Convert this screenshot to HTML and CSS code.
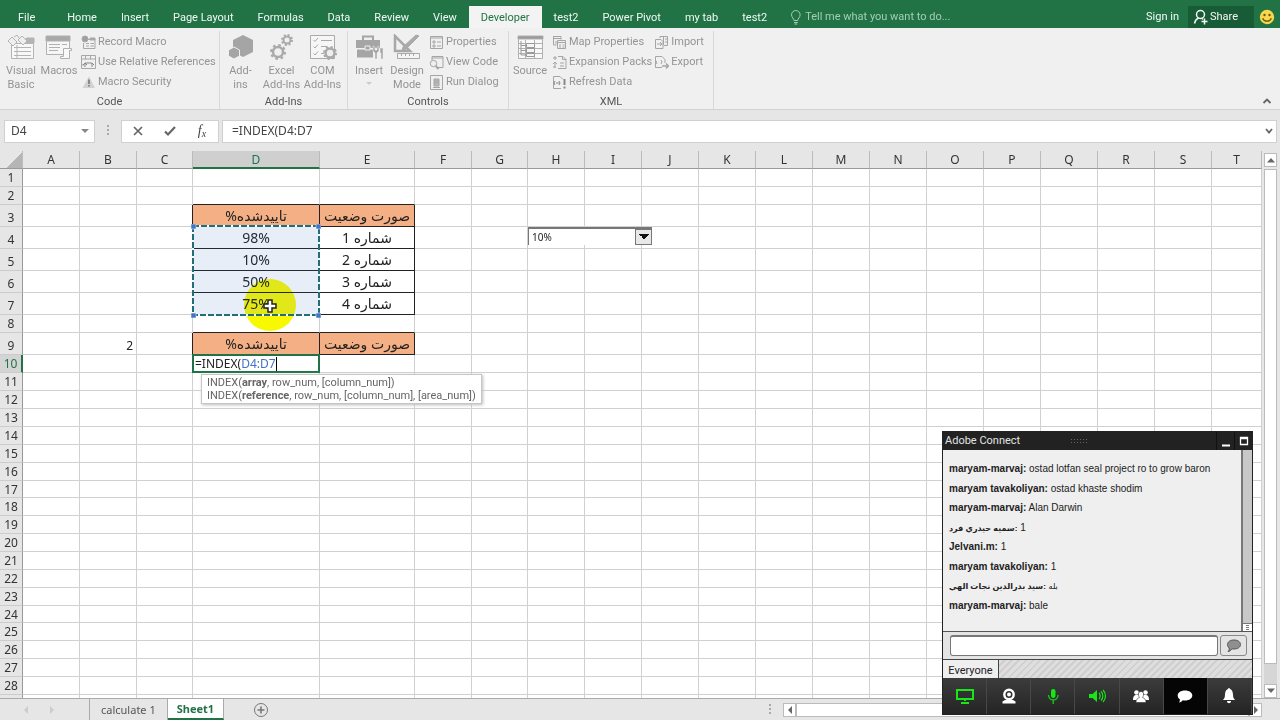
FILE: index.html
```html
<!DOCTYPE html>
<html lang="en">
<head>
<meta charset="utf-8">
<title>Sheet1 - Excel</title>
<link rel="stylesheet" href="styles.css">
</head>
<body>
<div class="app">
  <nav class="tabs">
    <button class="tab file">File</button>
    <button class="tab">Home</button>
    <button class="tab">Insert</button>
    <button class="tab">Page Layout</button>
    <button class="tab">Formulas</button>
    <button class="tab">Data</button>
    <button class="tab">Review</button>
    <button class="tab">View</button>
    <button class="tab active">Developer</button>
    <button class="tab">test2</button>
    <button class="tab">Power Pivot</button>
    <button class="tab">my tab</button>
    <button class="tab">test2</button>
    <button class="tell"><svg width="12" height="15" viewBox="0 0 12 15" fill="none" stroke="currentColor"><path d="M4 10.500C4 8.500 1.500 7.500 1.500 4.800a4.300 4.300 0 0 1 8.600 0C10.100 7.500 7.700 8.500 7.700 10.500zM4 12.500h3.700M4.500 14h2.700"/></svg>Tell me what you want to do...</button>
    <button class="signin">Sign in</button>
    <button class="share"><svg width="16" height="16" viewBox="0 0 16 16" fill="none" stroke="currentColor" stroke-width="1.500"><circle cx="7.500" cy="5.500" r="4"/><path d="M5.500 9C3 10 2 12 1.500 14.500M9 9.500l1 .8M11.500 9.500v6M8.500 12.500h6"/></svg>Share</button>
    <svg class="smile" width="16" height="16" viewBox="0 0 16 16"><circle cx="8" cy="8" r="7.200" fill="#f8d84a"/><circle cx="5.500" cy="6" r="1.200" fill="#6b5314"/><circle cx="10.500" cy="6" r="1.200" fill="#6b5314"/><path d="M3.700 9.200c1.500 4 7.100 4 8.600 0" fill="none" stroke="#6b5314" stroke-width="1.300"/></svg>
  </nav>

  <section class="ribbon">
    <div class="group code">
      <div class="tools">
        <button class="big"><svg width="28" height="26" viewBox="0 0 28 26" fill="none" stroke="#b4b4b4"><path d="M4.500 9.500h22v15h-22z" fill="#f8f8f8"/><path d="M19 4h8v5h-8z" fill="#b4b4b4"/><path d="M7 13.500h17M7 17.500h17M7 21.500h17M10 11v13"/><path d="M1 7l4-4 5 5-4 4zM11 6l4-4 5 5-4 4z" fill="#efefef"/><path d="M7 3l3-2 2 3"/></svg>Visual<br>Basic</button>
        <button class="big"><svg width="28" height="26" viewBox="0 0 28 26" fill="none" stroke="#b0b0b0"><path d="M1.500 2.500h23v18h-23z" fill="#f6f6f6"/><path d="M1 2h24v5H1z" fill="#a8a8a8"/><path d="M4 10.500h11M17 10.500h5M4 13.500h11M4 16.500h9"/><path d="M18.500 14.500h8v2h-2v8h-9v-2h3z" fill="#f8f8f8"/></svg>Macros</button>
        <div class="stack">
          <button><svg viewBox="0 0 15 15" fill="none" stroke="#a8a8a8"><path d="M4 4.500h10v9H2.500V8"/><circle cx="4" cy="4" r="3" fill="#a0a0a0"/><path d="M9 3h5v2H9z" fill="#a8a8a8"/><path d="M5 8.500h3M9.500 8.500H13M5 11h3M9.500 11H13"/></svg>Record Macro</button>
          <button><svg viewBox="0 0 15 15" fill="none" stroke="#a8a8a8"><path d="M.5.500h14v13H.5zM.5 4h14M.5 10h3M4.500.500v4M9.500.500v4"/><path d="M4 12V8h7v4M4 8l-2 2M4 8l2 2M11 8l2 2" stroke="#888"/></svg>Use Relative References</button>
          <button><svg viewBox="0 0 15 15"><path d="M8 1.500l6 11.500H1.500z" fill="#d2d2d2"/><path d="M7.200 4.500h1.600v4.500H7.200zM7.200 10h1.600v1.600H7.200z" fill="#777"/></svg>Macro Security</button>
        </div>
      </div>
      <div class="caption">Code</div>
    </div>
    <div class="group addins">
      <div class="tools">
        <button class="big"><svg width="28" height="26" viewBox="0 0 28 26" fill="#a5a5a5"><path d="M16 1l10 5v12l-10 5-10-5V6z"/><path d="M7 13l5.500 3v6L7 25l-5.500-3v-6z" stroke="#f0f0f0"/></svg>Add-<br>ins</button>
        <button class="big"><svg width="28" height="26" viewBox="0 0 28 26" fill="none" stroke="#aaa"><circle cx="10" cy="18" r="5" stroke-width="2.500"/><circle cx="10" cy="18" r="7" stroke-width="2" stroke-dasharray="2.700 2.800"/><circle cx="19" cy="6" r="3.500" stroke-width="2"/><circle cx="19" cy="6" r="5" stroke-width="2" stroke-dasharray="2 1.930"/></svg>Excel<br>Add-Ins</button>
        <button class="big"><svg width="28" height="26" viewBox="0 0 28 26" fill="none" stroke="#aaa"><path d="M1.500 1.500h24v23h-24z" fill="#f6f6f6"/><path d="M4.500 6l1.500 1.500L9 4M4.500 12.500L6 14l3-3.500M4.500 19.500L6 21l3-3.500M12 6.500h11M12 12.500h6M12 19.500h3"/><circle cx="21" cy="19" r="4.500" stroke-width="2.500" fill="#eee"/><circle cx="21" cy="19" r="6" stroke-width="2" stroke-dasharray="2.200 2.510"/></svg>COM<br>Add-Ins</button>
      </div>
      <div class="caption">Add-Ins</div>
    </div>
    <div class="group controls">
      <div class="tools">
        <button class="big"><svg width="28" height="26" viewBox="0 0 28 26" fill="#a5a5a5"><path d="M8 6V2.500h10V6" fill="none" stroke="#a5a5a5" stroke-width="2"/><path d="M1 6h24v8H1zM2 15.500h16v8H2z"/><path d="M10 12h5v4h-5z" stroke="#eee"/><path d="M18 12v5l2 2v6h2v-6l2-2v-5l-2 1v3h-2v-3zM25 14h3v11h-2v-6h-1z" stroke="#f0f0f0" stroke-width=".5"/></svg>Insert<i class="caret"></i></button>
        <button class="big"><svg width="28" height="26" viewBox="0 0 28 26" fill="none" stroke="#a8a8a8"><path d="M2 2v15h15z" stroke-width="2.500"/><path d="M26 2L13 15l-4 2 1-4L23 1z" fill="#aaa"/><path d="M4.500 19.500h22v5h-22z" fill="#f5f5f5"/><path d="M8.500 20v2M12.500 20v2M16.500 20v2M20.500 20v2"/></svg>Design<br>Mode</button>
        <div class="stack">
          <button><svg viewBox="0 0 15 15" fill="none" stroke="#a5a5a5"><path d="M1.500 1.500h12v12h-12zM1.500 3h12"/><path d="M4 6h2v2H4zM4 10h2v2H4zM8 7h4M8 11h4"/></svg>Properties</button>
          <button><svg viewBox="0 0 15 15" fill="none" stroke="#a5a5a5"><path d="M3 5V1.500h11v11H9M3 3h11"/><circle cx="4.500" cy="8.500" r="3.200"/><path d="M7 11l2.500 3" stroke-width="2"/></svg>View Code</button>
          <button><svg viewBox="0 0 15 15" fill="none" stroke="#a5a5a5"><path d="M1.500.500h12v14h-12z"/><path d="M5 4h5v7H5zM5 6h5M5 8h5" fill="#bbb"/><path d="M4 12.500h7"/></svg>Run Dialog</button>
        </div>
      </div>
      <div class="caption">Controls</div>
    </div>
    <div class="group xml">
      <div class="tools">
        <button class="big"><svg width="28" height="26" viewBox="0 0 28 26" fill="none" stroke="#b0b0b0"><path d="M2.500 3.500h24v21h-24z" fill="#f8f8f8"/><path d="M2 2h25v3H2z" fill="#999"/><path d="M2 9.500h24M2 14.500h24M2 19.500h24M9.500 6v18M18.500 6v18"/><path d="M5 7v14h5M5 11.500h5M5 16.500h5" stroke="#999"/><path d="M10.500 9.500h8v4h-8zM10.500 14.500h8v4h-8zM10.500 19.500h8v3h-8z" fill="#f5f5f5" stroke="#999"/></svg>Source</button>
        <div class="stack">
          <button><svg viewBox="0 0 15 15" fill="none" stroke="#a5a5a5"><path d="M1 1.500h8v3M1.500 1v9h3M1 3.500h8M4 6v3"/><path d="M5.500 5.500h8v8h-8zM5.500 7.500h8M7 10h2M10.500 10h2M7 12h2M10.500 12h2"/></svg>Map Properties</button>
          <button><svg viewBox="0 0 15 15" fill="none" stroke="#a5a5a5"><path d="M6 1.500h5l3 3v9H6M10.500 1.500v3H14"/><path d="M3 1v4M1 3h4M3 13V7l-2 2M3 7l2 2M8 8h4M8 11h4M1 12h3"/></svg>Expansion Packs</button>
          <button><svg viewBox="0 0 15 15" fill="none" stroke="#a5a5a5"><path d="M9 13.500H1.500v-12H8l3 3"/><path d="M3 6l-1 2 1 2M7 6l1 2-1 2M4 8h3" stroke="#888"/><path d="M12.500 4v6M12.500 11.500v2" stroke="#888" stroke-width="2"/></svg>Refresh Data</button>
        </div>
        <div class="stack">
          <button><svg viewBox="0 0 15 15" fill="none" stroke="#a5a5a5"><path d="M6 3V1.500h7.500v9H10M9.500 1v9"/><path d="M1.500 4.500H7l2 2v7H1.500zM3 9h5M6 7l2 2-2 2M11 4h2M11 7h2"/></svg>Import</button>
          <button><svg viewBox="0 0 15 15" fill="none" stroke="#a5a5a5"><path d="M8 12.500H1.500v-11H8l3 3V8M3 6l-1 1 1 2M7 5l1 2-1 2"/><path d="M8 11h6M12 8.500l2.500 2.500-2.500 2.500" stroke-width="1.500"/></svg>Export</button>
        </div>
      </div>
      <div class="caption">XML</div>
    </div>
    <button class="collapse" aria-label="Collapse ribbon"><svg width="10" height="8" viewBox="0 0 10 8"><path d="M1.500 6L5 2.500 8.500 6" fill="none" stroke="#666" stroke-width="1.800"/></svg></button>
  </section>

  <section class="formula">
    <div class="namebox"><input aria-label="Name box" value="D4"><i class="caret"></i></div>
    <span class="dots"></span>
    <div class="fbuttons">
      <button aria-label="Cancel"><svg width="12" height="12" viewBox="0 0 12 12"><path d="M2 2l8 8M10 2l-8 8" stroke="#666" stroke-width="1.700"/></svg></button>
      <button aria-label="Enter"><svg width="14" height="12" viewBox="0 0 14 12"><path d="M2 6.500l3 3L12 2" fill="none" stroke="#666" stroke-width="2.200"/></svg></button>
      <button aria-label="Insert function" class="fx">f<small>x</small></button>
    </div>
    <div class="fbox"><input aria-label="Formula bar" value="=INDEX(D4:D7"><svg width="10" height="8" viewBox="0 0 10 8"><path d="M2 2l3 3.500L8 2" fill="none" stroke="#666" stroke-width="1.800"/></svg></div>
  </section>

  <main class="sheet">
    <div class="gridwrap"><table class="grid" id="grid"></table></div>
    <div class="vscroll">
      <button aria-label="Scroll up"><svg width="8" height="6" viewBox="0 0 8 6"><path d="M0 5.500L4 1l4 4.500z"/></svg></button>
      <div class="vthumb"></div>
      <div class="vtrack"></div>
      <button aria-label="Scroll down"><svg width="8" height="6" viewBox="0 0 8 6"><path d="M0 .500L4 5 8 .500z"/></svg></button>
    </div>
  </main>

  <footer class="sheets">
    <span class="nav"><svg width="6" height="8" viewBox="0 0 6 8"><path d="M5 0v8L1 4z"/></svg><svg width="6" height="8" viewBox="0 0 6 8"><path d="M1 0v8l4-4z"/></svg></span>
    <button class="stab">calculate 1</button>
    <button class="stab on">Sheet1</button>
    <button class="add" aria-label="New sheet"><svg width="16" height="16" viewBox="0 0 16 16" fill="none" stroke="#777"><circle cx="8" cy="8" r="6.500"/><path d="M8 4.500v7M4.500 8h7" stroke-width="1.600"/></svg></button>
    <span class="dots"></span>
    <div class="hscroll">
      <button aria-label="Scroll left"><svg width="6" height="8" viewBox="0 0 6 8"><path d="M5 0v8L1 4z"/></svg></button>
      <div class="hthumb"></div>
      <button aria-label="Scroll right"><svg width="6" height="8" viewBox="0 0 6 8"><path d="M1 0v8l4-4z"/></svg></button>
    </div>
  </footer>

  <aside class="chat">
    <header><span>Adobe Connect</span><i class="grip"></i>
      <button aria-label="Minimize"><svg width="10" height="12" viewBox="0 0 10 12"><path d="M1 10.500h8" stroke="#fff" stroke-width="2"/></svg></button>
      <button aria-label="Maximize"><svg width="10" height="12" viewBox="0 0 10 12"><path d="M1.500 2.500h7v7h-7zM1 3.500h8" fill="none" stroke="#fff" stroke-width="1.300"/></svg></button>
    </header>
    <div class="log">
      <ul>
        <li><b>maryam-marvaj:</b> ostad lotfan seal project ro to grow baron</li>
        <li><b>maryam tavakoliyan:</b> ostad khaste shodim</li>
        <li><b>maryam-marvaj:</b> Alan Darwin</li>
        <li><b class="fa" dir="rtl">:سميه حيدري فرد</b> 1</li>
        <li><b>Jelvani.m:</b> 1</li>
        <li><b>maryam tavakoliyan:</b> 1</li>
        <li><b class="fa" dir="rtl">:سيد بدرالدين نجات الهي</b> <span class="fa">بله</span></li>
        <li><b>maryam-marvaj:</b> bale</li>
      </ul>
      <div class="logbar"><i></i></div>
    </div>
    <div class="compose">
      <input aria-label="Message">
      <button aria-label="Send"><svg width="16" height="14" viewBox="0 0 16 14"><path d="M8 1c4 0 6.500 2 6.500 4.500S12 10 8 10c-1 0-1.500 0-2.200-.2C5 11.500 3.500 12.500 2 12.500c1-1 1.500-2 1.200-3.500C2 8 1.500 7 1.500 5.500 1.500 3 4 1 8 1z" fill="#8f8f8f" stroke="#555"/></svg></button>
    </div>
    <div class="rooms"><button>Everyone</button></div>
    <div class="dock">
      <button aria-label="Share screen"><svg viewBox="0 0 20 20" fill="none" stroke="#19e619" stroke-width="2"><path d="M2 4h16v9H2zM10 13v2M6 17h8"/></svg></button>
      <button aria-label="Camera"><svg viewBox="0 0 20 20" fill="#fff"><circle cx="10" cy="8.500" r="4.700" fill="none" stroke="#fff" stroke-width="2.400"/><circle cx="10" cy="8.500" r="2"/><path d="M6 14h8l2.500 1.500v2h-13v-2z"/></svg></button>
      <button aria-label="Microphone"><svg viewBox="0 0 20 20" fill="#19e619"><rect x="8" y="3" width="4.500" height="9" rx="2.200"/><path d="M5.500 9c0 6.500 9.500 6.500 9.500 0M10.200 14v4" fill="none" stroke="#19c619" stroke-width="1.400"/></svg></button>
      <button aria-label="Speaker"><svg viewBox="0 0 20 20" fill="#19e619"><path d="M2 8h3.500L10 4v12l-4.500-4H2z"/><path d="M12 7c1.500 1.500 1.500 4.500 0 6M14 5.500c2.500 2.500 2.500 6.500 0 9M16 4c3.300 3.300 3.300 8.700 0 12" fill="none" stroke="#19e619" stroke-width="1.200"/></svg></button>
      <button aria-label="Attendees"><svg viewBox="0 0 20 20" fill="#fff"><circle cx="5.500" cy="6.500" r="2.300"/><circle cx="14.500" cy="6.500" r="2.300"/><path d="M2 14c0-4 1.500-5 3.500-5h9c2 0 3.500 1 3.500 5z"/><path d="M5 16.500c0-3.500 1.500-4 3.500-5-2-3-1-6 1.500-6s3.500 3 1.500 6c2 1 3.500 1.500 3.500 5z" stroke="#333" stroke-width=".6"/></svg></button>
      <button aria-label="Chat" class="on"><svg viewBox="0 0 20 20" fill="#fff"><path d="M10 4.500c4.500 0 7.300 2.200 7.300 5s-2.800 5-7.300 5c-1 0-1.600 0-2.300-.2-1 1.300-2 2.200-3.700 2.200.8-1 1-2 .8-3.200C3.400 12.500 2.700 11 2.700 9.500c0-2.800 2.800-5 7.300-5z"/></svg></button>
      <button aria-label="Alerts"><svg viewBox="0 0 20 20" fill="#fff"><path d="M10 3c3 0 3.800 2.500 4 5.500.1 3 .5 4 2.200 5.500H3.800C5.500 12.500 5.900 11.500 6 8.500 6.200 5.500 7 3 10 3zM8 15h4c0 3-4 3-4 0zM9.300 2h1.400v2H9.300z"/></svg></button>
    </div>
  </aside>
</div>
<script src="grid.js"></script>
</body>
</html>
```
FILE: grid.js
```js
const cols = 'ABCDEFGHIJKLMNOPQRST'.split('');
const widths = { C: 56, D: 127, E: 95, G: 56 };
const tall = [3, 4, 5, 6, 7, 9];
const short = [17, 24];

const ants = `<svg class="glow" viewBox="0 0 130 108" width="130" height="108"><circle cx="79" cy="81" r="26" fill="#f8f800"/></svg>
<svg class="ants" viewBox="0 0 130 94" width="130" height="94" fill="none">
  <rect x="2" y="2" width="126" height="89" fill="#4472c4" fill-opacity=".12"/>
  <rect x="2" y="2" width="126" height="89" stroke="#fff" stroke-width="2"/>
  <rect x="2" y="2" width="126" height="89" stroke="#1f6f78" stroke-width="2" stroke-dasharray="6 2"/>
  <g fill="#4472c4" stroke="#fff" stroke-width=".5"><rect x="0" y="0" width="5" height="5"/><rect x="125" y="0" width="5" height="5"/><rect x="0" y="89" width="5" height="5"/><rect x="125" y="89" width="5" height="5"/></g>
  <path d="M77 76h4v4h4v4h-4v4h-4v-4h-4v-4h4z" fill="#fff" stroke="#222" stroke-width="1.500"/>
</svg>`;

const cells = {
  D3: ['head', '<span dir="rtl">تاییدشده%</span>'],
  E3: ['head', '<span dir="rtl">صورت وضعیت</span>'],
  D4: ['box pos', '98%' + ants], D5: ['box', '10%'], D6: ['box', '50%'], D7: ['box', '75%'],
  E4: ['box', '<span dir="rtl">شماره 1</span>'],
  E5: ['box', '<span dir="rtl">شماره 2</span>'],
  E6: ['box', '<span dir="rtl">شماره 3</span>'],
  E7: ['box', '<span dir="rtl">شماره 4</span>'],
  D9: ['head', '<span dir="rtl">تاییدشده%</span>'],
  E9: ['head', '<span dir="rtl">صورت وضعیت</span>'],
  B9: ['num', '2'],
  H4: ['pos', '<select class="combo" aria-label="Percentage"><option>10%</option></select>'],
  D10: ['pos edit', '<div class="editor">=INDEX(<em>D4:D7</em><i></i></div><div class="hint">INDEX(<b>array</b>, row_num, [column_num])<br>INDEX(<b>reference</b>, row_num, [column_num], [area_num])</div>']
};
const topEdge = ['D2', 'E2', 'D8', 'E8'];
const leftEdge = ['C3', 'C4', 'C5', 'C6', 'C7', 'C9'];

let html = '<colgroup><col style="width:23px">';
for (const c of cols) html += c === 'T' ? '<col>' : `<col style="width:${widths[c] || 57}px">`;
html += '</colgroup><thead><tr><th class="corner"></th>';
for (const c of cols) html += `<th${c === 'D' ? ' class="sel"' : ''}>${c}</th>`;
html += '</tr></thead><tbody>';
for (let r = 1; r <= 29; r++) {
  const size = tall.includes(r) ? 'tall' : short.includes(r) ? 'short' : '';
  html += `<tr class="${size}"><th${r === 10 ? ' class="sel"' : ''}>${r < 29 ? r : ''}</th>`;
  for (const c of cols) {
    const id = c + r;
    const [cls, body] = cells[id] || ['', ''];
    const edge = (topEdge.includes(id) ? ' bedge' : '') + (leftEdge.includes(id) ? ' redge' : '');
    html += `<td class="${cls}${edge}">${body}</td>`;
  }
  html += '</tr>';
}
document.getElementById('grid').innerHTML = html + '</tbody>';
```
FILE: styles.css
```css
* { box-sizing: border-box; }
body { margin: 0; font: 11px/14px Roboto, "DejaVu Sans", sans-serif; color: #222; }
button { border: 0; background: none; padding: 0; margin: 0; font: inherit; color: inherit; white-space: nowrap; }
input { font: inherit; border: 0; padding: 0; color: inherit; min-width: 0; background: transparent; }
svg { flex: none; }
.app { position: relative; display: flex; flex-direction: column; height: 100vh; overflow: hidden; background: #e6e6e6; }

.tabs { display: flex; align-items: stretch; height: 28px; flex: none; padding-top: 6px; background: #217346; color: #f2f8f4; }
.tab { padding: 1px 12px 0; }
.tab.file { padding: 1px 20px 0 18px; }
.tab.active { background: #f3f3f3; color: #217346; }
.tell { display: flex; align-items: center; gap: 3px; padding-left: 11px; color: #a5cdb5; }
.signin { margin-left: auto; padding: 0 9px; }
.share { display: flex; align-items: center; gap: 1px; width: 66px; padding-left: 5px; background: #185c37; }
.smile { margin: 3px 5px 0 5px; }

.ribbon { display: flex; flex: none; height: 82px; padding: 3px 0 0; background: #f0f0f0; border-bottom: 1px solid #d2d2d2; color: #949494; }
.group { display: flex; flex-direction: column; justify-content: space-between; border-right: 1px solid #d8d8d8; padding: 0 2px; }
.code { width: 220px; }
.addins { width: 128px; padding: 0; }
.controls { width: 161px; }
.xml { width: 205px; }
.tools { display: flex; }
.big { display: flex; flex-direction: column; align-items: center; flex: none; width: 38px; padding-top: 3px; line-height: 14px; gap: 4px; }
.addins .big { width: 41px; }
.stack { display: flex; flex-direction: column; padding: 1px 0 0 3px; }
.stack + .stack { padding-left: 2px; }
.stack button { display: flex; align-items: center; gap: 2px; height: 20px; }
.stack svg { width: 15px; height: 15px; }
.caption { text-align: center; color: #555; line-height: 14px; }
.caret { width: 0; height: 0; border: 4px solid transparent; border-top-color: #888; border-bottom: 0; }
.big .caret { border-width: 3px; border-top-color: #ccc; border-bottom: 0; }
.collapse { margin: auto 8px 0 auto; }

.formula { display: flex; align-items: center; flex: none; height: 41px; padding: 1px 3px 0 4px; color: #444; font: 12px/16px "Noto Sans", sans-serif; }
.namebox { display: flex; align-items: center; width: 91px; height: 23px; padding: 0 5px 0 6px; background: #fff; border: 1px solid #d0d0d0; }
.namebox input { flex: 1; }
.dots { width: 2px; height: 12px; margin: 0 12px; background: repeating-linear-gradient(#aaa 0 2px, transparent 2px 4px); }
.fbuttons { display: flex; width: 98px; height: 23px; background: #fff; border: 1px solid #d0d0d0; }
.fbuttons button { flex: 1; display: flex; align-items: center; justify-content: center; }
.fbuttons .fx { font: italic 14px "Liberation Serif", serif; }
.fx small { font-size: 10px; padding-top: 4px; }
.fbox { display: flex; align-items: center; flex: 1; height: 23px; margin-left: 3px; padding: 0 2px 0 9px; background: #fff; border: 1px solid #d0d0d0; }
.fbox input { flex: 1; }

.sheet { display: flex; flex: 1; min-height: 0; background: #fff; }
.gridwrap { flex: 1; min-width: 0; overflow: hidden; }
.grid { table-layout: fixed; width: 100%; border-spacing: 0; font: 12px/16px "Noto Sans", "DejaVu Sans", sans-serif; }
.grid th, .grid td { height: 18px; padding: 0; line-height: 16px; border: solid #d0d0d0; border-width: 0 1px 1px 0; }
.grid th { font-weight: 400; color: #333; background: #e6e6e6; border-color: #bbb; overflow: hidden; }
.grid thead th { height: 18px; border-bottom-color: #999; }
.grid thead .sel { background: #cfcfcf; color: #217346; border-bottom: 2px solid #217346; line-height: 15px; }
.grid tbody th { border-bottom-color: #ccc; border-right-color: #999; }
.grid tbody .sel { background: #d4d4d4; color: #217346; border-right: 2px solid #217346; }
.grid .corner { background: linear-gradient(135deg, #e6e6e6 60%, #b5b5b5 60%); }
.grid .tall > * { height: 22px; }
.grid .tall > th { padding-top: 4px; }
.grid .short > * { height: 17px; line-height: 15px; }
.grid td.box, .grid td.head { text-align: center; font-size: 14px; line-height: 20px; border-color: #222; }
.grid td.head { background: #f4b084; line-height: 18px; }
.grid td.num { text-align: right; padding: 4px 3px 0 0; }
.grid td.bedge { border-bottom-color: #222; }
.grid td.redge { border-right-color: #222; }
.grid td.pos { position: relative; }
.ants, .glow { position: absolute; left: -2px; top: -3px; z-index: 2; }
.glow { mix-blend-mode: multiply; }
.combo { position: absolute; left: 0; top: 0; width: 124px; height: 18px; padding: 0 3px; appearance: none; font: 10px "Noto Sans", sans-serif; color: #222; border: solid #777; border-width: 2px 0 0 1px; border-radius: 0;
  background: linear-gradient(45deg, transparent 50%, #111 50%) 110px 5px / 5px 5px no-repeat, linear-gradient(315deg, transparent 50%, #111 50%) 115px 5px / 5px 5px no-repeat, linear-gradient(#e8e8e8, #e8e8e8) 107px 1px / 15px 14px no-repeat, linear-gradient(#777, #777) right / 17px 100% no-repeat, #fff; }
.editor { position: absolute; inset: -1px -1px -1px -1px; padding-left: 1px; border: 2px solid #217346; background: #fff; display: flex; align-items: center; line-height: 14px; z-index: 1; }
.editor em { font-style: normal; color: #4472c4; }
.editor i { width: 1px; height: 14px; background: #000; }
.hint { position: absolute; left: 8px; top: 19px; z-index: 2; padding: 1px 5px; background: #fff; border: 1px solid #c6c6c6; box-shadow: 1px 1px 3px #bbb; color: #666; font: 11px/13px Roboto, sans-serif; white-space: nowrap; }

.vscroll { display: flex; flex-direction: column; width: 18px; padding: 2px 3px 0 2px; background: #e6e6e6; }
.vscroll button, .hscroll button { display: flex; align-items: center; justify-content: center; flex: none; width: 13px; height: 14px; background: #fff; border: 1px solid #bbb; fill: #666; }
.vthumb { flex: 1; margin-top: 2px; background: #fff; border: 1px solid #bbb; }
.vtrack { height: 20px; background: #d6d6d6; }

.sheets { display: flex; align-items: center; flex: none; height: 22px; border-top: 1px solid #aaa; font: 11px/14px "Noto Sans", sans-serif; color: #555; }
.nav { display: flex; gap: 20px; width: 90px; height: 100%; align-items: center; padding-left: 23px; fill: #ccc; border-right: 1px solid #aaa; }
.stab { height: 100%; padding: 0 11px; border-right: 1px solid #aaa; }
.stab.on { padding: 0 9px; background: #fff; color: #217346; font-weight: 700; border-bottom: 2px solid #217346; }
.add { margin-left: 29px; display: flex; }
.sheets .dots { margin-left: auto; }
.hscroll { display: flex; width: 479px; margin-right: 18px; }
.hthumb { flex: 1; background: #fff; border: 1px solid #bbb; }

.chat { position: absolute; right: 27px; bottom: 5px; width: 311px; height: 284px; display: flex; flex-direction: column; border: 1px solid #222; background: #e4e4e4; z-index: 5; }
.chat header { display: flex; align-items: stretch; height: 18px; flex: none; padding-left: 2px; background: #222; color: #e2e2e2; line-height: 17px; }
.chat header button { width: 18px; display: flex; align-items: center; justify-content: center; border-left: 1px solid #111; }
.grip { width: 17px; height: 5px; margin: 6px auto 6px 50px; background: radial-gradient(#666 30%, transparent 40%) 0 0 / 3px 3px; }
.log { display: flex; flex: 1; min-height: 0; background: #efefef; }
.log ul { flex: 1; display: flex; flex-direction: column; justify-content: space-between; margin: 0; padding: 11px 6px 17px; list-style: none; font: 10px/16px "Liberation Sans", "DejaVu Sans", sans-serif; color: #222; }
.log .fa { font-size: 8px; }
.log li { height: 16px; white-space: nowrap; }
.logbar { width: 11px; background: #c8c8c8; border-left: 2px solid #777; display: flex; align-items: flex-end; }
.logbar i { width: 9px; height: 8px; background: repeating-linear-gradient(#777 0 1px, #fff 1px 2px) center / 3px 5px no-repeat #fff; border-top: 1px solid #777; }
.compose { display: flex; gap: 2px; height: 28px; flex: none; padding: 3px 5px 3px 7px; border-top: 1px solid #555; }
.compose input { flex: 1; background: #fff; border: 1px solid #777; border-top-width: 2px; border-radius: 3px; }
.compose button { width: 27px; display: flex; align-items: center; justify-content: center; border: 1px solid #888; border-radius: 3px; }
.rooms { display: flex; height: 19px; flex: none; border-top: 1px solid #444; background: repeating-linear-gradient(135deg, #dedede 0 3px, #cfcfcf 3px 5px); }
.rooms button { width: 56px; padding-top: 3px; background: #efefef; border-right: 1px solid #444; }
.dock { display: flex; height: 36px; flex: none; background: linear-gradient(#3c3c3c, #242424); }
.dock button { flex: 1; display: flex; align-items: center; justify-content: center; border-right: 1px solid #484848; }
.dock .on { background: #050505; }
.dock svg { width: 20px; height: 20px; }
```
